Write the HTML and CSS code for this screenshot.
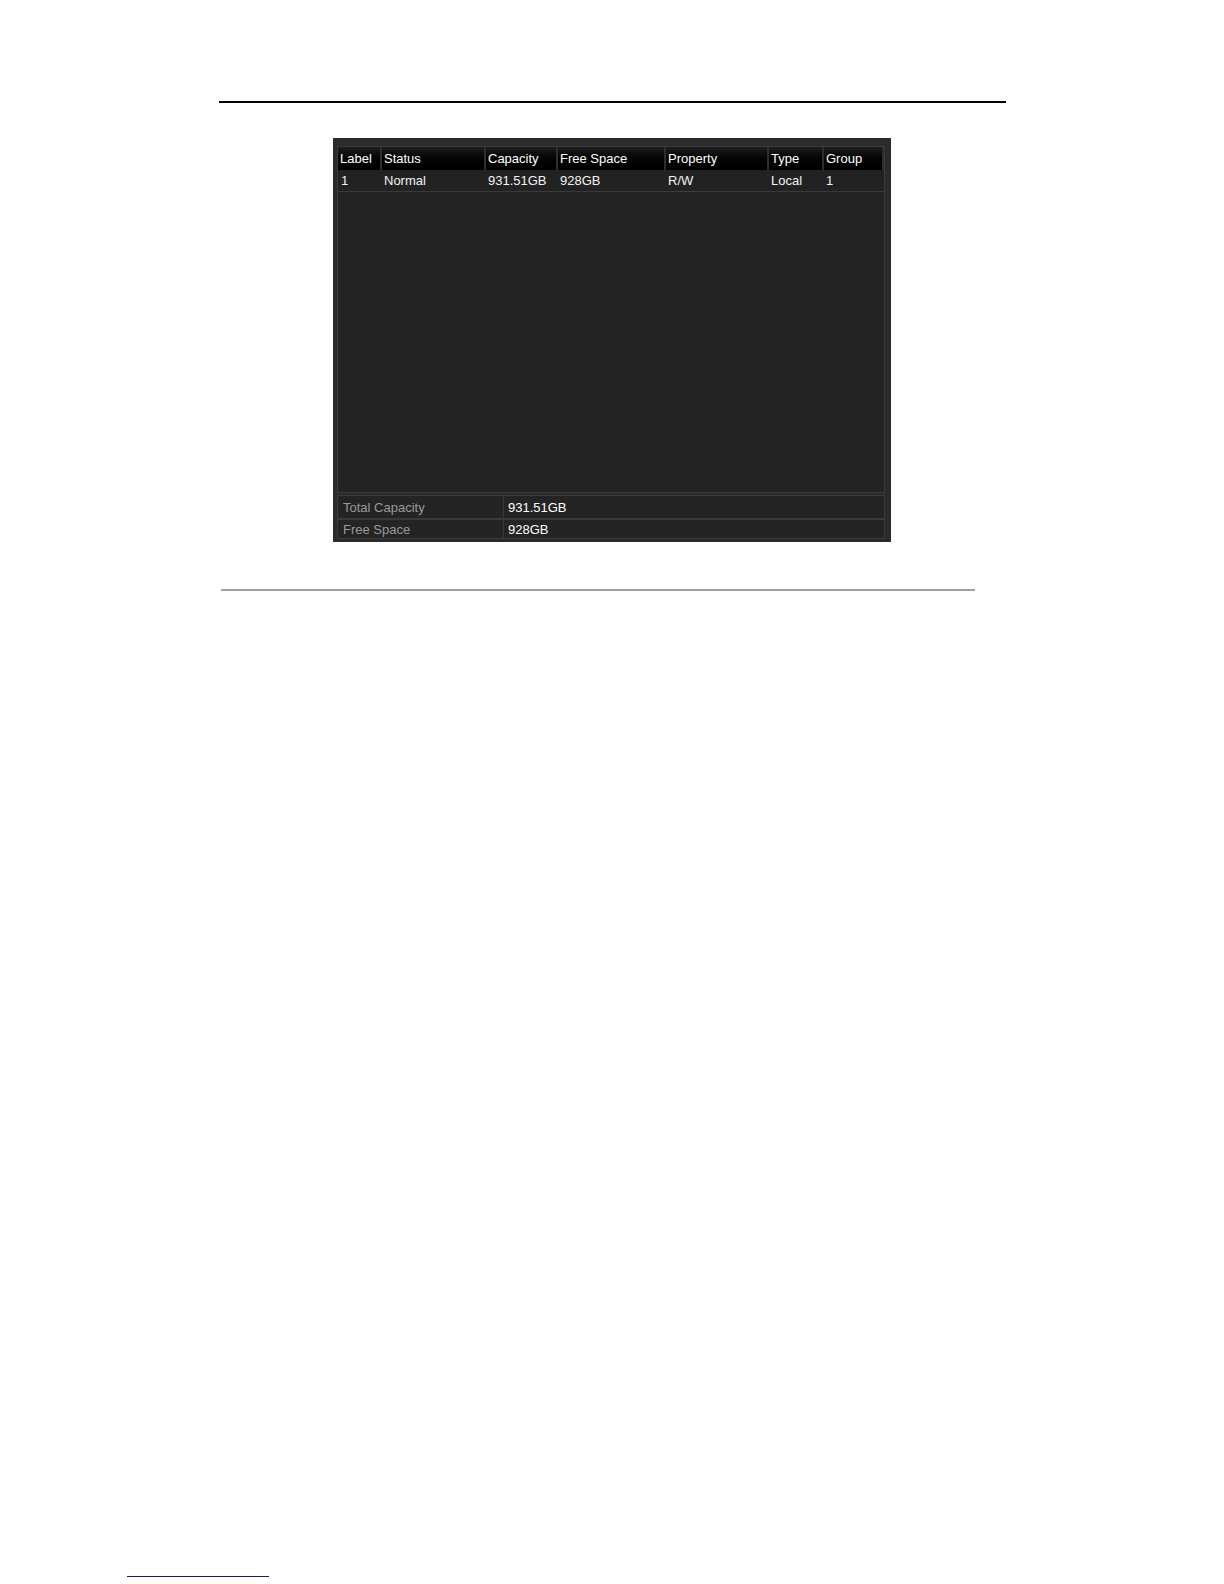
FILE: index.html
```html
<!DOCTYPE html>
<html>
<head>
<meta charset="utf-8">
<link rel="stylesheet" href="styles.css">
</head>
<body>
<div class="page">
  <div class="rule-top"></div>
  <div class="panel">
    <div class="table-box">
      <div class="row head">
        <div class="cell">Label</div>
        <div class="cell">Status</div>
        <div class="cell">Capacity</div>
        <div class="cell">Free Space</div>
        <div class="cell">Property</div>
        <div class="cell">Type</div>
        <div class="cell">Group</div>
      </div>
      <div class="row data">
        <div class="cell">1</div>
        <div class="cell">Normal</div>
        <div class="cell">931.51GB</div>
        <div class="cell">928GB</div>
        <div class="cell">R/W</div>
        <div class="cell">Local</div>
        <div class="cell">1</div>
      </div>
      <div class="empty"></div>
    </div>
    <div class="summary">
      <div class="srow">
        <div class="slabel">Total Capacity</div>
        <div class="svalue">931.51GB</div>
      </div>
      <div class="srow second">
        <div class="slabel">Free Space</div>
        <div class="svalue">928GB</div>
      </div>
    </div>
  </div>
  <div class="rule-bottom"></div>
  <div class="footnote-rule"></div>
</div>
</body>
</html>
```

FILE: styles.css
```css
html, body {
  margin: 0;
  padding: 0;
  background: #ffffff;
}

.page {
  width: 1224px;
  height: 1584px;
  overflow: hidden;
  font-family: "Liberation Sans", Arial, sans-serif;
}

.rule-top {
  margin-top: 101px;
  margin-left: 219px;
  width: 787px;
  height: 2px;
  background: #000000;
}

.panel {
  margin-top: 35px;
  margin-left: 333px;
  width: 558px;
  height: 404px;
  box-sizing: border-box;
  padding: 8px 6px 3px 4px;
  background: #2b2b2b;
  display: flex;
  flex-direction: column;
  gap: 2px;
}

.table-box {
  height: 347px;
  box-sizing: border-box;
  border: 1px solid #3a3a3a;
  background: #242424;
  display: flex;
  flex-direction: column;
}

.row {
  display: grid;
  grid-template-columns: 42px 102px 70px 106px 101px 53px 58px;
  column-gap: 2px;
  font-size: 13px;
  color: #ffffff;
}

.row .cell {
  padding-left: 2px;
  white-space: nowrap;
  display: flex;
  align-items: center;
}

.head {
  height: 23px;
  background: #2e2e2e;
}

.head .cell {
  background: linear-gradient(#1e1e1e 0%, #050505 45%, #000000 100%);
}

.data {
  height: 21px;
  border-bottom: 1px solid #3a3a3a;
  background: #222222;
  color: #f2f2f2;
}

.data .cell:first-child {
  padding-left: 3px;
}

.empty {
  flex: 1;
}

.summary {
  height: 44px;
  box-sizing: border-box;
  border: 1px solid #3a3a3a;
  background: #242424;
  display: flex;
  flex-direction: column;
}

.srow {
  display: flex;
  height: 22px;
  font-size: 13px;
}

.srow.second {
  height: 18px;
  border-top: 2px solid #3a3a3a;
}

.slabel {
  width: 166px;
  box-sizing: border-box;
  padding-left: 5px;
  border-right: 1px solid #3a3a3a;
  color: #999999;
  display: flex;
  align-items: center;
}

.svalue {
  padding-left: 4px;
  color: #ffffff;
  display: flex;
  align-items: center;
}

.rule-bottom {
  margin-top: 47px;
  margin-left: 221px;
  width: 754px;
  height: 2px;
  background: #a0a0a0;
}

.footnote-rule {
  margin-top: 985px;
  margin-left: 127px;
  width: 142px;
  height: 1px;
  background: #1a1a8c;
}
```
